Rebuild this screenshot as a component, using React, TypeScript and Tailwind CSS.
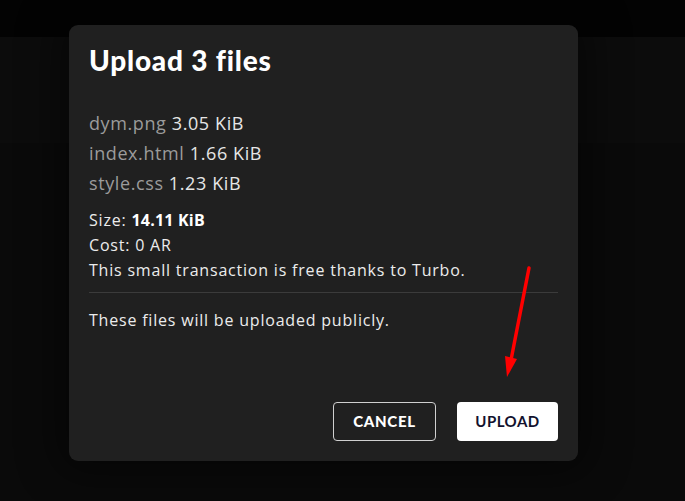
import React from "react";

const files = [
  { name: "dym.png", size: "3.05 KiB" },
  { name: "index.html", size: "1.66 KiB" },
  { name: "style.css", size: "1.23 KiB" },
];

export default function App() {
  return (
    <div className="relative w-[685px] h-[501px] overflow-hidden bg-[#0a0a0a] font-['Open_Sans',sans-serif]">
      <div className="absolute inset-x-0 top-0 h-[37px] bg-[#030303]" />
      <div className="absolute inset-x-0 top-[37px] h-[106px] bg-[#0c0c0c]" />
      <div className="relative pt-[25px] pl-[69px]">
        <div className="w-[509px] h-[436px] rounded-[9px] bg-[#202020] shadow-[0_0_40px_12px_rgba(0,0,0,0.45)] px-5 pt-[17px] flex flex-col">
          <h1 className="text-[28px] leading-[36px] font-black text-white tracking-[0.8px] font-['Lato',sans-serif]">
            Upload 3 files
          </h1>
          <div className="mt-[30px] flex flex-col">
            {files.map((f) => (
              <div key={f.name} className="text-[18px] leading-[30px] tracking-[0.6px]">
                <span className="text-[#9b9b9b]">{f.name}</span>{" "}
                <span className="text-[#e6e6e6]">{f.size}</span>
              </div>
            ))}
          </div>
          <div className="mt-[10px] flex flex-col text-[16px] leading-[25px] tracking-[0.8px] text-[#ececec]">
            <div>
              Size: <span className="font-bold text-white tracking-[0.2px]">14.11 KiB</span>
            </div>
            <div>Cost: 0 AR</div>
            <div>This small transaction is free thanks to Turbo.</div>
          </div>
          <div className="mt-[9px] h-px bg-[#3b3b3b]" />
          <div className="mt-[15px] text-[16px] leading-[25px] tracking-[0.8px] text-[#ececec]">
            These files will be uploaded publicly.
          </div>
          <div className="mt-auto mb-[20px] flex justify-end gap-[21px]">
            <button className="w-[103px] h-[39px] rounded-[4px] border border-[#d0d0d0] text-white text-[15px] font-black tracking-[0.7px] font-['Lato',sans-serif]">
              CANCEL
            </button>
            <button className="w-[101px] h-[39px] rounded-[4px] bg-white text-[#12122e] text-[15px] font-bold tracking-[0.5px] font-['Lato',sans-serif]">
              UPLOAD
            </button>
          </div>
        </div>
      </div>
      <svg className="absolute left-0 top-0" width="685" height="501" viewBox="0 0 685 501">
        <line x1="529" y1="268" x2="511" y2="360" stroke="#ff0000" strokeWidth="3.5" strokeLinecap="round" />
        <polygon points="505,356 517,359 507,377" fill="#ff0000" />
      </svg>
    </div>
  );
}
